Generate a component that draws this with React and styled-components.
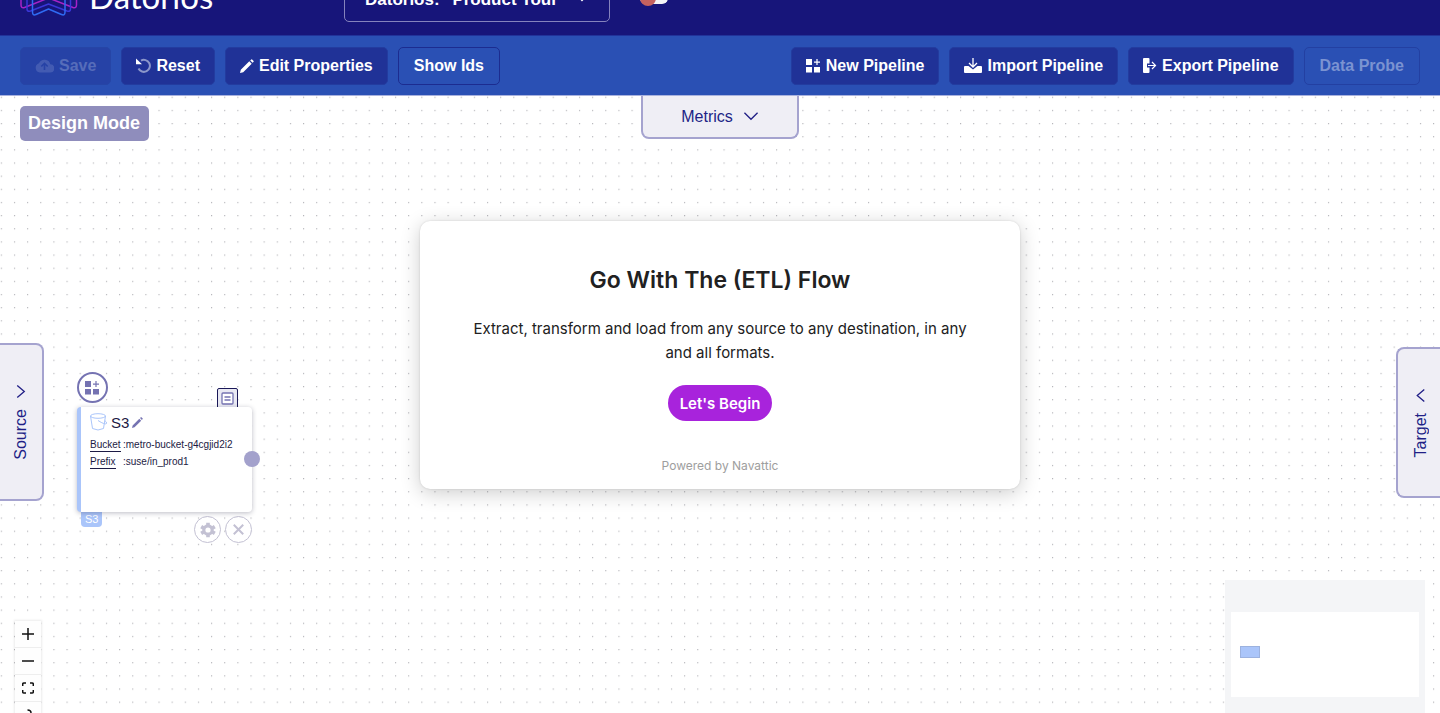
import React from "react";
import styled, { createGlobalStyle, css } from "styled-components";

const GlobalStyle = createGlobalStyle`
  *, *::before, *::after { box-sizing: border-box; }
  body { margin: 0; background: #fff; }
  button, select { font-family: inherit; margin: 0; }
  svg { display: block; flex: none; }
`;

const Page = styled.div`
  height: 100vh;
  display: flex;
  flex-direction: column;
  overflow: hidden;
  font-family: "Liberation Sans", Arial, sans-serif;
  color: #17157a;
`;

const Header = styled.header`
  flex: none;
  height: 36px;
  padding: 0 20px 13px;
  display: flex;
  align-items: flex-end;
  overflow: hidden;
  background: #17157a;
  border-bottom: 1px solid #21339a;
`;

const Brand = styled.a`
  width: 324px;
  padding-bottom: 6px;
  display: flex;
  align-items: flex-end;
  gap: 11px;
  color: #fff;
  text-decoration: none;
`;

const BrandName = styled.span`
  font: 400 33px/32px Lato, sans-serif;
  padding-bottom: 4px;
`;

const Picker = styled.div`
  position: relative;
  width: 266px;
  svg { position: absolute; right: 22px; top: 17px; }
`;

const PickerSelect = styled.select`
  appearance: none;
  width: 100%;
  height: 46px;
  padding: 0 40px 0 20px;
  border: 1px solid #8583bd;
  border-radius: 5px;
  background: transparent;
  color: #fff;
  font-size: 17px;
  font-weight: 700;
`;

const Toggle = styled.input`
  appearance: none;
  position: relative;
  width: 28px;
  height: 12px;
  margin: 0 0 18px 30px;
  border-radius: 6px;
  background: #f4f4f6;
  &::before {
    content: "";
    position: absolute;
    left: 0;
    top: -2px;
    width: 16px;
    height: 16px;
    border-radius: 50%;
    background: #c4625f;
  }
`;

const Toolbar = styled.div`
  flex: none;
  height: 60px;
  padding: 0 20px;
  display: flex;
  align-items: center;
  gap: 10px;
  background: #2a50b4;
  border-bottom: 1px solid #a9b2de;
`;

const Spacer = styled.div`
  flex: 1;
`;

const ToolButton = styled.button`
  height: 38px;
  padding: 0 14px;
  display: flex;
  align-items: center;
  gap: 5px;
  white-space: nowrap;
  border: 1px solid #233c9f;
  border-radius: 5px;
  background: #203297;
  color: #fff;
  font-size: 16px;
  font-weight: 700;
  ${(p) => p.$outline && css`
    padding: 0 15px;
    background: transparent;
    border-color: #1c2c90;
  `}
  &:disabled {
    color: ${(p) => (p.$outline ? "#7b93d1" : "#566dba")};
    border-color: ${(p) => (p.$outline ? "#2340a2" : "#2645a6")};
    background: ${(p) => (p.$outline ? "transparent" : "#2642a6")};
  }
`;

const Canvas = styled.main`
  flex: 1;
  min-height: 0;
  position: relative;
  overflow: hidden;
`;

const Dots = styled.svg`
  position: absolute;
  inset: 0;
  width: 100%;
  height: 100%;
`;

const ModeTag = styled.div`
  position: absolute;
  left: 20px;
  top: 10px;
  height: 35px;
  padding: 0 9px 0 8px;
  border-radius: 5px;
  background: #8f8dbc;
  color: #fff;
  font-size: 18px;
  line-height: 35px;
  font-weight: 700;
`;

const edge = "2px solid #a5a3cf";

const DrawerTab = styled.button`
  position: absolute;
  display: flex;
  align-items: center;
  justify-content: center;
  gap: 10px;
  padding: 0;
  background: #efeef5;
  color: #211f86;
  font-size: 16px;
  line-height: 20px;
  border: ${edge};
`;

const MetricsTab = styled(DrawerTab)`
  left: calc(50% - 79px);
  top: 0;
  width: 158px;
  height: 43px;
  border-top: 0;
  border-radius: 0 0 8px 8px;
`;

const SideTab = styled(DrawerTab)`
  width: 44px;
  flex-direction: column;
  span {
    writing-mode: vertical-rl;
    transform: rotate(180deg);
  }
`;

const SourceTab = styled(SideTab)`
  left: 0;
  top: 247px;
  height: 158px;
  border-left: 0;
  border-radius: 0 8px 8px 0;
`;

const TargetTab = styled(SideTab)`
  right: 0;
  top: 251px;
  height: 151px;
  padding-left: 4px;
  border-right: 0;
  border-radius: 8px 0 0 8px;
`;

const Node = styled.article`
  position: absolute;
  left: 77px;
  top: 311px;
  width: 175px;
`;

const NodeCard = styled.div`
  position: relative;
  height: 105px;
  padding: 5px 4px 0 9px;
  border-left: 4px solid #aac5fa;
  border-radius: 4px;
  background: #fff;
  box-shadow: 0 1px 5px rgba(30, 30, 60, 0.3);
`;

const NodeTitle = styled.div`
  display: flex;
  align-items: center;
  gap: 3px;
  height: 20px;
  font-size: 15px;
  span { color: #1c1a44; }
  color: #7573b2;
`;

const Fields = styled.dl`
  margin: 6px 0 0;
  display: grid;
  grid-template-columns: 33px 1fr;
  row-gap: 3px;
  color: #1c1a44;
  font-size: 10px;
  line-height: 13px;
  dt span { display: inline-block; border-bottom: 1px solid #1c1a44; }
  dd { margin: 0; white-space: nowrap; }
`;

const AddBadge = styled.button`
  position: absolute;
  left: 0;
  top: -35px;
  width: 31px;
  height: 31px;
  padding: 0;
  display: grid;
  place-items: center;
  border: 2px solid #7573b2;
  border-radius: 50%;
  background: #fff;
  color: #7573b2;
`;

const NoteBadge = styled.button`
  position: absolute;
  right: 14px;
  top: -19px;
  width: 21px;
  height: 22px;
  padding: 3px 0 0;
  display: flex;
  justify-content: center;
  border: 1px solid #1a1858;
  border-radius: 2px;
  background: #e9e9f3;
`;

const Port = styled.span`
  position: absolute;
  right: -8px;
  top: 44px;
  width: 16px;
  height: 16px;
  border-radius: 50%;
  background: #a3a1cc;
`;

const NodeFooter = styled.div`
  display: flex;
  align-items: flex-start;
  gap: 4px;
  padding-left: 4px;
`;

const TypeTag = styled.span`
  margin-right: auto;
  padding: 0 4px;
  border-radius: 0 0 4px 4px;
  background: #aac5fa;
  color: #fff;
  font-size: 11px;
  line-height: 15px;
`;

const RoundButton = styled.button`
  width: 27px;
  height: 27px;
  margin-top: 4px;
  padding: 0;
  display: grid;
  place-items: center;
  border: 1px solid #c3c1d3;
  border-radius: 50%;
  background: #fff;
  color: #c3c1d3;
`;

const Controls = styled.div`
  position: absolute;
  left: 15px;
  bottom: -16px;
  display: flex;
  flex-direction: column;
  box-shadow: 0 0 2px 1px rgba(0, 0, 0, 0.08);
`;

const ControlButton = styled.button`
  width: 26px;
  height: 27px;
  padding: 0;
  display: grid;
  place-items: center;
  border: 0;
  border-bottom: 1px solid #eee;
  background: #fefefe;
  color: #111;
`;

const MiniMap = styled.div`
  position: absolute;
  right: 15px;
  bottom: -17px;
  width: 200px;
  height: 150px;
  padding: 32px 6px 33px;
  background: #f4f5f7;
`;

const MiniView = styled.div`
  height: 85px;
  padding: 34px 9px;
  background: #fff;
`;

const MiniNode = styled.div`
  width: 20px;
  height: 12px;
  border: 1px solid #9cb2df;
  background: #aac5fa;
`;

const Dialog = styled.section`
  position: absolute;
  left: calc(50% - 300px);
  top: 125px;
  width: 600px;
  padding: 40px 40px 15px;
  display: flex;
  flex-direction: column;
  align-items: center;
  border-radius: 10px;
  background: #fff;
  box-shadow: 0 4px 20px rgba(0, 0, 0, 0.2), 0 0 2px rgba(0, 0, 0, 0.15);
  color: #212121;
  font-family: Inter, sans-serif;
  text-align: center;
  h2 { margin: 0; font-size: 23px; line-height: 38px; font-weight: 600; }
  p { margin: 18px 0 20px; font-size: 15px; line-height: 24px; }
`;

const BeginButton = styled.button`
  height: 36px;
  padding: 0 12px;
  border: 0;
  border-radius: 18px;
  background: #a823dc;
  color: #fff;
  font-size: 15px;
  font-weight: 600;
`;

const PoweredBy = styled.a`
  margin-top: 37px;
  color: #9e9e9e;
  font-size: 12px;
  line-height: 16px;
  text-decoration: none;
`;

const Logo = () => (
  <svg width="58" height="60" viewBox="0 0 58 60" fill="none" strokeWidth="1.5" strokeLinejoin="round">
    <path d="M1 14L28.500 1L56.500 14V49Q56.500 52.500 53 51.500L28.500 42L4.500 51.500Q1 52.500 1 49Z" stroke="#a823c8" />
    <path d="M7 18L28.500 8L50.500 18V53Q50.500 56 47 55L28.500 48L10.500 55Q7 56 7 53Z" stroke="#3a37d8" />
    <path d="M12.500 22L28.500 15L45 22V56Q45 60 41.500 58.500L28.500 53L16 58.500Q12.500 60 12.500 56Z" stroke="#2f6bf2" />
  </svg>
);

const Chevron = ({ dir }) => {
  const d = { down: "M1 4L8 11L15 4", right: "M4 1.500L11.500 8L4 14.500", left: "M11.500 1.500L4 8L11.500 14.500" }[dir];
  return (
    <svg width="16" height="15" viewBox="0 0 16 16" fill="none" stroke="currentColor" strokeWidth="1.4">
      <path d={d} />
    </svg>
  );
};

const CloudIcon = () => (
  <svg width="19" height="14" viewBox="0 0 19 14">
    <path fill="currentColor" opacity=".6" d="M15.300 5.300A6 6 0 0 0 4 4.200A4.800 4.800 0 0 0 4.800 13.500H15A4.100 4.100 0 0 0 15.300 5.300Z" />
    <path d="M9.500 11V4.500M6.300 7.500L9.500 4.300L12.700 7.500" fill="none" stroke="#2642a6" strokeWidth="1.600" />
  </svg>
);

const ResetIcon = () => (
  <svg width="15" height="16" viewBox="0 0 15 16">
    <path d="M5 2.600A6 6 0 1 1 2.500 10.500" fill="none" stroke="#8c97ca" strokeWidth="2" />
    <path d="M0 .5V6.300H6Z" fill="#fff" />
  </svg>
);

const PencilIcon = ({ size }) => (
  <svg width={size} height={size} viewBox="0 0 14 14" fill="currentColor">
    <path d="M0 14L.8 10.800L9.300 2.300L11.700 4.700L3.200 13.200ZM10.200 1.400L11.300 .4Q11.700 0 12.100 .4L13.600 1.900Q14 2.300 13.600 2.700L12.600 3.800Z" />
  </svg>
);

const TilesIcon = () => (
  <svg width="15" height="14" viewBox="0 0 15 14" fill="currentColor">
    <path d="M0 0H6V6H0ZM0 8H6V13.500H0ZM8 8H14V13.500H8ZM10.400 0H11.600V2.500H14V3.700H11.600V6H10.400V3.700H8V2.500H10.400Z" />
  </svg>
);

const ImportIcon = () => (
  <svg width="18" height="16" viewBox="0 0 18 16">
    <path fill="currentColor" d="M1 8H4.500L9 11.500L13.500 8H17Q18 8 18 9V14Q18 15 17 15H1Q0 15 0 14V9Q0 8 1 8Z" />
    <path d="M9 0V8.500M5 5L9 9L13 5" fill="none" stroke="currentColor" strokeWidth="1.300" />
  </svg>
);

const ExportIcon = () => (
  <svg width="14" height="16" viewBox="0 0 14 16">
    <path fill="currentColor" d="M1 0H5.500Q6.500 0 6.500 1V5.500H4V9.500H6.500V14Q6.500 15 5.500 15H1Q0 15 0 14V1Q0 0 1 0Z" />
    <path d="M5 7.500H12.500M9 4L12.500 7.500L9 11" fill="none" stroke="currentColor" strokeWidth="1.200" />
  </svg>
);

const BucketIcon = () => (
  <svg width="18" height="18" viewBox="0 0 18 18" fill="none" stroke="#aac5fa">
    <ellipse cx="8" cy="3" rx="7.500" ry="2.300" />
    <path d="M.5 3L2.500 15.500Q8 18.500 13.500 15.500L15.500 3M8 7.500Q15 12 16.500 10.500Q17 9 14.800 7.500" />
  </svg>
);

const NoteIcon = () => (
  <svg width="13" height="13" viewBox="0 0 13 13" fill="#fff" stroke="#7573b2" strokeWidth="1.300">
    <rect x="1" y="1" width="11" height="11" rx="1" />
    <path d="M3.500 5H9.500M3.500 8H9.500" />
  </svg>
);

const GearIcon = () => (
  <svg width="16" height="16" viewBox="0 0 16 16" fill="none" stroke="currentColor">
    <circle cx="8" cy="8" r="4.200" strokeWidth="3.200" />
    <path d="M8 .8V3M8 13V15.200M1.200 4.600L3.500 6M12.500 10L14.800 11.400M14.800 4.600L12.500 6M3.500 10L1.200 11.400" strokeWidth="3.600" />
  </svg>
);

const CrossIcon = () => (
  <svg width="11" height="11" viewBox="0 0 10 10" stroke="currentColor" strokeWidth="1.800">
    <path d="M.7 .7L9.300 9.300M9.300 .7L.7 9.300" />
  </svg>
);

const controlPaths = [
  ["Zoom in", "M6 0V12M0 6H12"],
  ["Zoom out", "M0 6H12"],
  ["Fit view", "M.7 4V2Q.7 1 2 1H4M8 1H10Q11.300 1 11.300 2V4M11.300 8V10Q11.300 11 10 11H8M4 11H2Q.7 11 .7 10V8"],
  ["Unlock", "M5.500 1Q9 1 9 4V6M1.500 6H10.500V12H1.500Z"],
];

export default function App() {
  return (
    <Page>
      <GlobalStyle />
      <Header>
        <Brand href="#">
          <Logo />
          <BrandName>Datorios</BrandName>
        </Brand>
        <Picker>
          <PickerSelect aria-label="Pipeline" defaultValue="tour">
            <option value="tour">Datorios: "Product Tour"</option>
          </PickerSelect>
          <svg width="12" height="10" viewBox="0 0 12 10" fill="none" stroke="#fff" strokeWidth="2">
            <path d="M1 2L6 7L11 2" />
          </svg>
        </Picker>
        <Toggle type="checkbox" aria-label="Run pipeline" />
      </Header>
      <Toolbar>
        <ToolButton disabled><CloudIcon />Save</ToolButton>
        <ToolButton><ResetIcon />Reset</ToolButton>
        <ToolButton><PencilIcon size={14} />Edit Properties</ToolButton>
        <ToolButton $outline>Show Ids</ToolButton>
        <Spacer />
        <ToolButton><TilesIcon />New Pipeline</ToolButton>
        <ToolButton><ImportIcon />Import Pipeline</ToolButton>
        <ToolButton><ExportIcon />Export Pipeline</ToolButton>
        <ToolButton $outline disabled>Data Probe</ToolButton>
      </Toolbar>
      <Canvas>
        <Dots aria-hidden="true">
          <defs>
            <pattern id="dots" x="0.8" y="0.7" width="13.140" height="13.150" patternUnits="userSpaceOnUse">
              <circle cx="0.600" cy="0.600" r="0.600" fill="#a2a2a8" />
            </pattern>
          </defs>
          <rect width="100%" height="100%" fill="url(#dots)" />
        </Dots>
        <ModeTag>Design Mode</ModeTag>
        <MetricsTab><span>Metrics</span><Chevron dir="down" /></MetricsTab>
        <SourceTab><Chevron dir="right" /><span>Source</span></SourceTab>
        <TargetTab><Chevron dir="left" /><span>Target</span></TargetTab>
        <Node>
          <AddBadge aria-label="Add to group"><TilesIcon /></AddBadge>
          <NoteBadge aria-label="Notes"><NoteIcon /></NoteBadge>
          <NodeCard>
            <NodeTitle><BucketIcon /><span>S3</span><PencilIcon size={11} /></NodeTitle>
            <Fields>
              <dt><span>Bucket</span></dt><dd>:metro-bucket-g4cgjid2i2</dd>
              <dt><span>Prefix</span></dt><dd>:suse/in_prod1</dd>
            </Fields>
            <Port />
          </NodeCard>
          <NodeFooter>
            <TypeTag>S3</TypeTag>
            <RoundButton aria-label="Settings"><GearIcon /></RoundButton>
            <RoundButton aria-label="Remove"><CrossIcon /></RoundButton>
          </NodeFooter>
        </Node>
        <Controls>
          {controlPaths.map(([label, d]) => (
            <ControlButton key={label} aria-label={label}>
              <svg width="12" height="12" viewBox="0 0 12 12" fill="none" stroke="currentColor" strokeWidth="1.500">
                <path d={d} />
              </svg>
            </ControlButton>
          ))}
        </Controls>
        <MiniMap><MiniView><MiniNode /></MiniView></MiniMap>
        <Dialog role="dialog" aria-labelledby="tour-title">
          <h2 id="tour-title">Go With The (ETL) Flow</h2>
          <p>Extract, transform and load from any source to any destination, in any and all formats.</p>
          <BeginButton>Let's Begin</BeginButton>
          <PoweredBy href="#">Powered by Navattic</PoweredBy>
        </Dialog>
      </Canvas>
    </Page>
  );
}
